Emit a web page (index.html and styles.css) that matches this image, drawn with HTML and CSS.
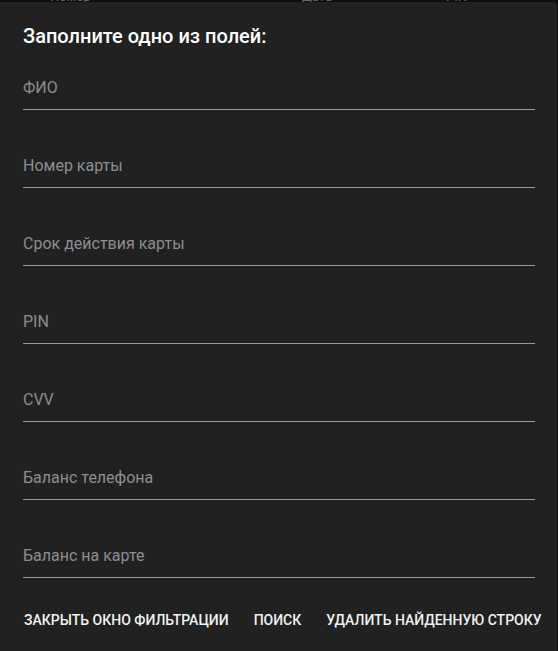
FILE: index.html
```html
<!DOCTYPE html>
<html lang="ru">
<head>
<meta charset="utf-8">
<link rel="stylesheet" href="styles.css">
</head>
<body>
<div class="backdrop">
  <div class="peek">
    <span class="peek-a">Номер</span><span class="peek-b">Дата</span><span class="peek-c">PIN</span>
  </div>
  <div class="dialog">
    <h1 class="title">Заполните одно из полей:</h1>
    <div class="fields">
      <div class="field"><span class="label">ФИО</span></div>
      <div class="field"><span class="label">Номер карты</span></div>
      <div class="field"><span class="label">Срок действия карты</span></div>
      <div class="field"><span class="label">PIN</span></div>
      <div class="field"><span class="label">CVV</span></div>
      <div class="field"><span class="label">Баланс телефона</span></div>
      <div class="field"><span class="label">Баланс на карте</span></div>
    </div>
    <div class="actions">
      <button class="btn">Закрыть окно фильтрации</button>
      <button class="btn">Поиск</button>
      <button class="btn">Удалить найденную строку</button>
    </div>
  </div>
</div>
</body>
</html>
```
FILE: styles.css
```css
* { box-sizing: border-box; }
html, body { margin: 0; padding: 0; }
body {
  background: #0d0d0d;
  font-family: Roboto, "Noto Sans", sans-serif;
  width: 558px;
  height: 651px;
  overflow: hidden;
}
.backdrop {
  position: relative;
  height: 651px;
}
.peek {
  position: absolute;
  top: -8px;
  left: 0;
  width: 558px;
  height: 10px;
  font-size: 13px;
  color: #6a6a6a;
  line-height: 10px;
}
.peek-a { position: absolute; left: 50px; }
.peek-b { position: absolute; left: 302px; }
.peek-c { position: absolute; left: 446px; }
.dialog {
  position: absolute;
  top: 2px;
  left: 0;
  width: 557px;
  height: 649px;
  background: #212121;
  border-radius: 0 3px 0 0;
  padding: 0 23px 0 23px;
  display: flex;
  flex-direction: column;
}
.title {
  margin: 22px 0 0 0;
  font-size: 20px;
  font-weight: 500;
  color: #ffffff;
  line-height: 24px;
}
.fields {
  display: flex;
  flex-direction: column;
  margin-top: 13px;
  width: 512px;
}
.field {
  height: 78px;
  border-bottom: 1px solid #9a9a9a;
  display: flex;
  align-items: flex-end;
  padding-bottom: 11px;
}
.field:first-child { height: 49px; }
.label {
  font-size: 16px;
  color: #8e8e8e;
  line-height: 20px;
}
.actions {
  display: flex;
  gap: 25px;
  margin-top: 34px;
  margin-left: 1px;
}
.btn {
  background: none;
  border: none;
  padding: 0;
  font-family: Roboto, "Noto Sans", sans-serif;
  font-size: 14px;
  font-weight: 500;
  color: #f2f2f2;
  text-transform: uppercase;
  line-height: 16px;
  letter-spacing: 0;
  white-space: nowrap;
}
```
